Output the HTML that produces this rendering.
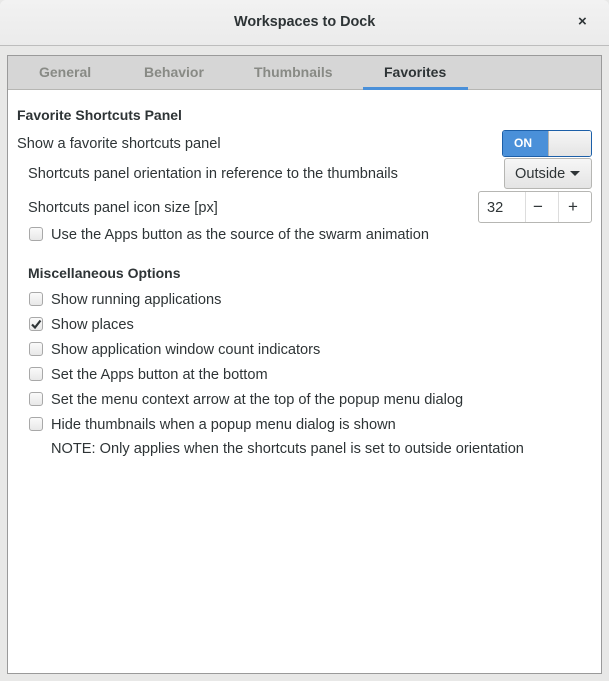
<!DOCTYPE html>
<html><head><style>
*{margin:0;padding:0;box-sizing:border-box}
body{width:609px;height:681px;background:#e8e8e7;font-family:"Liberation Sans","DejaVu Sans",sans-serif;font-size:14.6px;color:#2e3436;position:relative;overflow:hidden}
.t{position:absolute;white-space:nowrap;line-height:16px;margin-top:1px}
.title{position:absolute;left:0;top:0;width:609px;height:46px;background:linear-gradient(#f2f2f2,#ebebeb);border-bottom:1px solid #bdbdbd;border-radius:6px 6px 0 0}
.frame{position:absolute;left:7px;top:55px;width:595px;height:619px;border:1px solid #9a9a9a;background:#fff}
.tabs{position:absolute;left:0;top:0;width:593px;height:34px;background:#d6d6d6;border-bottom:1px solid #b6b6b3}
.tab{position:absolute;top:8px;font-size:14px;font-weight:bold;color:#888a85}
.cb{position:absolute;left:29px;width:14px;height:14px;border:1px solid #a8a8a8;border-radius:3px;background:linear-gradient(#fafafa,#e8e8e8)}
.b{font-weight:bold;font-size:14px;margin-top:0}
</style></head><body>
<div class="title"></div>
<div class="t b" style="left:234px;top:14px;font-size:14.4px;color:#2e3436">Workspaces to Dock</div>
<div class="t b" style="left:578px;top:14px;font-size:15px">×</div>
<div class="frame">
 <div class="tabs">
  <div class="tab" style="left:31px">General</div>
  <div class="tab" style="left:136px">Behavior</div>
  <div class="tab" style="left:246px">Thumbnails</div>
  <div class="tab" style="left:376px;color:#2e3436">Favorites</div>
  <div style="position:absolute;left:355px;top:31px;width:105px;height:3px;background:#4a90d9"></div>
 </div>
</div>
<div class="t b" style="left:17px;top:107px">Favorite Shortcuts Panel</div>
<div class="t" style="left:17px;top:135px">Show a favorite shortcuts panel</div>
<div style="position:absolute;left:502px;top:130px;width:90px;height:27px;border:1px solid #1c5fa8;border-radius:3px;background:#fff;overflow:hidden">
 <div style="position:absolute;left:0;top:0;width:45px;height:25px;background:#4a90d9;color:#fff;font-weight:bold;font-size:12px;line-height:25px;padding-left:11px">ON</div>
 <div style="position:absolute;left:45px;top:0;width:44px;height:25px;background:linear-gradient(#f6f6f6,#e4e4e4);border-left:1px solid #b6b6b3"></div>
</div>
<div class="t" style="left:28px;top:165px">Shortcuts panel orientation in reference to the thumbnails</div>
<div style="position:absolute;left:504px;top:158px;width:88px;height:31px;border:1px solid #b6b6b3;border-radius:3px;background:linear-gradient(#f6f6f6,#e4e4e4)"></div>
<div class="t" style="left:515px;top:165px">Outside</div>
<div style="position:absolute;left:570px;top:171px;width:0;height:0;border-left:5px solid transparent;border-right:5px solid transparent;border-top:5px solid #2e3436"></div>
<div class="t" style="left:28px;top:199px">Shortcuts panel icon size [px]</div>
<div style="position:absolute;left:478px;top:191px;width:114px;height:32px;border:1px solid #b6b6b3;border-radius:3px;background:#fff">
 <div style="position:absolute;left:46px;top:0;width:1px;height:30px;background:#ddd"></div>
 <div style="position:absolute;left:79px;top:0;width:1px;height:30px;background:#ddd"></div>
</div>
<div class="t" style="left:487px;top:199px">32</div>
<div class="t" style="left:533px;top:198px;font-size:17px">−</div>
<div class="t" style="left:568px;top:198px;font-size:17px">+</div>
<div class="cb" style="top:227px"></div>
<div class="t" style="left:51px;top:226px">Use the Apps button as the source of the swarm animation</div>
<div class="t b" style="left:28px;top:265px">Miscellaneous Options</div>
<div class="cb" style="top:292px"></div><div class="t" style="left:51px;top:291px">Show running applications</div>
<div class="cb" style="top:317px"></div>
<svg style="position:absolute;left:30px;top:318px" width="12" height="12" viewBox="0 0 12 12"><path d="M2 6.5 L5 9.5 L10.5 2.5" fill="none" stroke="#2e3436" stroke-width="2.2"/></svg>
<div class="t" style="left:51px;top:316px">Show places</div>
<div class="cb" style="top:342px"></div><div class="t" style="left:51px;top:341px">Show application window count indicators</div>
<div class="cb" style="top:367px"></div><div class="t" style="left:51px;top:366px">Set the Apps button at the bottom</div>
<div class="cb" style="top:392px"></div><div class="t" style="left:51px;top:391px">Set the menu context arrow at the top of the popup menu dialog</div>
<div class="cb" style="top:417px"></div><div class="t" style="left:51px;top:416px">Hide thumbnails when a popup menu dialog is shown</div>
<div class="t" style="left:51px;top:440px">NOTE: Only applies when the shortcuts panel is set to outside orientation</div>
</body></html>
